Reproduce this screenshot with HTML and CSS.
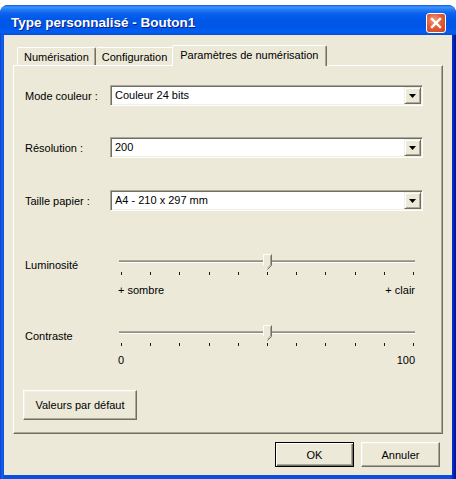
FILE: index.html
```html
<!DOCTYPE html>
<html lang="fr">
<head>
<meta charset="utf-8">
<title>Type personnalisé - Bouton1</title>
<link rel="stylesheet" href="styles.css">
</head>
<body>
<div class="window">
  <div class="titlebar">
    <span class="title">Type personnalisé - Bouton1</span>
    <div class="close">
      <svg width="18" height="18" viewBox="0 0 18 18"><path d="M5 5 L13 13 M13 5 L5 13" stroke="#fff" stroke-width="2.4" stroke-linecap="square"/></svg>
    </div>
  </div>
  <div class="client">
    <div class="tabs">
      <div class="tab">Numérisation</div>
      <div class="tab">Configuration</div>
      <div class="tab active">Paramètres de numérisation</div>
    </div>
    <div class="panel">
      <div class="field">
        <span class="label">Mode couleur :</span>
        <div class="combo"><span class="value">Couleur 24 bits</span><span class="drop"><svg width="7" height="4" viewBox="0 0 7 4"><path d="M0 0H7L3.5 4Z" fill="#000"/></svg></span></div>
      </div>
      <div class="field">
        <span class="label">Résolution :</span>
        <div class="combo"><span class="value">200</span><span class="drop"><svg width="7" height="4" viewBox="0 0 7 4"><path d="M0 0H7L3.5 4Z" fill="#000"/></svg></span></div>
      </div>
      <div class="field third">
        <span class="label">Taille papier :</span>
        <div class="combo"><span class="value">A4 - 210 x 297 mm</span><span class="drop"><svg width="7" height="4" viewBox="0 0 7 4"><path d="M0 0H7L3.5 4Z" fill="#000"/></svg></span></div>
      </div>

      <div class="slider-row first">
        <span class="label slabel">Luminosité</span>
        <div class="slider">
          <div class="track-box">
            <div class="track"></div>
            <svg class="thumb" width="9" height="16" viewBox="0 0 9 16"><path d="M0.5 0.5H8.5V11.5L4.5 15.5L0.5 11.5Z" fill="#ECE9D8"/><path d="M0.5 11.5V0.5H8" stroke="#fff" fill="none"/><path d="M8.5 0.5V11.5L4.5 15.5" stroke="#716F64" fill="none"/><path d="M7.5 1.5V11L4.5 14" stroke="#ACA899" fill="none"/></svg>
          </div>
          <div class="ticks"><i></i><i></i><i></i><i></i><i></i><i></i><i></i><i></i><i></i><i></i><i></i></div>
          <div class="scale"><span>+ sombre</span><span>+ clair</span></div>
        </div>
      </div>

      <div class="slider-row second">
        <span class="label slabel">Contraste</span>
        <div class="slider">
          <div class="track-box">
            <div class="track"></div>
            <svg class="thumb" width="9" height="16" viewBox="0 0 9 16"><path d="M0.5 0.5H8.5V11.5L4.5 15.5L0.5 11.5Z" fill="#ECE9D8"/><path d="M0.5 11.5V0.5H8" stroke="#fff" fill="none"/><path d="M8.5 0.5V11.5L4.5 15.5" stroke="#716F64" fill="none"/><path d="M7.5 1.5V11L4.5 14" stroke="#ACA899" fill="none"/></svg>
          </div>
          <div class="ticks"><i></i><i></i><i></i><i></i><i></i><i></i><i></i><i></i><i></i><i></i><i></i></div>
          <div class="scale"><span>0</span><span>100</span></div>
        </div>
      </div>

      <button class="btn defaults">Valeurs par défaut</button>
    </div>
    <div class="footer">
      <button class="btn default">OK</button>
      <button class="btn">Annuler</button>
    </div>
  </div>
</div>
</body>
</html>
```
FILE: styles.css
```css
html, body {
  margin: 0;
  padding: 0;
  background: #ffffff;
}
body {
  width: 456px;
  height: 479px;
  overflow: hidden;
  font-family: "Liberation Sans", Arial, sans-serif;
  font-size: 11px;
  color: #000;
}
.window {
  margin-top: 5px;
  height: 474px;
  display: flex;
  flex-direction: column;
  border-radius: 8px 8px 0 0;
  background: linear-gradient(to right, #0A3FD0 0px, #1662EC 2px, #0A4FDE 4px, #0A4FDE 451px, #0831D9 452px, #00138C 456px);
  overflow: hidden;
}
.titlebar {
  height: 30px;
  flex: none;
  display: flex;
  align-items: center;
  justify-content: space-between;
  background: linear-gradient(to bottom, #0A5BD8 0px, #3D93FF 2px, #2A82F8 4px, #0D63EE 8px, #0058E8 14px, #0055E6 22px, #0060F5 27px, #0A4CD2 30px);
}
.title {
  padding-left: 11px;
  padding-top: 5px;
  font-family: "Liberation Sans", Arial, sans-serif;
  font-weight: bold;
  font-size: 13.5px;
  color: #fff;
  text-shadow: 1px 1px 0 #0A1E8C;
}
.close {
  width: 18px;
  height: 18px;
  margin-right: 10px;
  margin-top: 6px;
  border: 1px solid #fff;
  border-radius: 3px;
  background: radial-gradient(circle at 40% 35%, #F0A080 0%, #E45D38 45%, #C8401C 100%);
  display: flex;
  align-items: center;
  justify-content: center;
}
.close svg { display: block; }
.client {
  flex: 1;
  margin: 0 4px 4px 4px;
  background: #ECE9D8;
  padding: 10px 9px 0 9px;
  display: flex;
  flex-direction: column;
}
.tabs {
  height: 20px;
  display: flex;
  align-items: flex-end;
  padding-left: 4px;
  position: relative;
  z-index: 1;
}
.tab {
  height: 18px;
  box-sizing: border-box;
  padding: 2px 6px 0 6px;
  line-height: 14px;
  border-top: 1px solid #fff;
  border-left: 1px solid #fff;
  border-right: 1px solid #716F64;
  box-shadow: inset -1px 0 #ACA899;
  border-radius: 2px 2px 0 0;
  background: #ECE9D8;
  white-space: nowrap;
}
.tab + .tab { border-left: none; }
.tab.active {
  height: 21px;
  margin-bottom: -1px;
  margin-left: -2px;
  padding: 2px 8px 0 7px;
  border-left: 1px solid #fff;
}
.panel {
  height: 369px;
  box-sizing: border-box;
  border-top: 1px solid #fff;
  border-left: 1px solid #fff;
  border-right: 1px solid #716F64;
  border-bottom: 1px solid #716F64;
  box-shadow: inset -1px -1px #ACA899;
  padding: 19px 0 0 11px;
  display: flex;
  flex-direction: column;
  align-items: flex-start;
}
.field {
  height: 21px;
  display: flex;
  align-items: center;
}
.field + .field { margin-top: 31px; }
.field.third { margin-top: 32px; }
.label {
  width: 85px;
  flex: none;
  line-height: 14px;
  white-space: nowrap;
}
.combo {
  width: 313px;
  height: 21px;
  box-sizing: border-box;
  background: #fff;
  border-style: solid;
  border-width: 1px;
  border-color: #ACA899 #fff #fff #ACA899;
  box-shadow: inset 1px 1px #716F64, inset -1px -1px #F1EFE2;
  padding: 1px;
  display: flex;
  align-items: stretch;
}
.value {
  flex: 1;
  padding-left: 3px;
  line-height: 17px;
  white-space: nowrap;
}
.drop {
  width: 17px;
  box-sizing: border-box;
  background: #ECE9D8;
  border-style: solid;
  border-width: 1px;
  border-color: #F1EFE2 #716F64 #716F64 #F1EFE2;
  box-shadow: inset 1px 1px #fff, inset -1px -1px #ACA899;
  display: flex;
  align-items: center;
  justify-content: center;
}
.drop svg { display: block; }
.slider-row {
  display: grid;
  grid-template-columns: 93px 298px;
  align-items: start;
}
.slider-row.first { margin-top: 42px; }
.slider-row.second { margin-top: 27px; }
.slabel { padding-top: 5px; width: auto; }
.slider { display: flex; flex-direction: column; }
.track-box {
  height: 16px;
  box-sizing: border-box;
  padding-top: 7px;
  position: relative;
}
.track {
  height: 3px;
  box-sizing: border-box;
  border-top: 1px solid #ACA899;
  background: #8F8D84;
  border-bottom: 1px solid #fff;
  margin: 0 1px;
}
.thumb {
  position: absolute;
  left: 145px;
  top: 1px;
  display: block;
}
.ticks {
  height: 8px;
  box-sizing: border-box;
  padding: 3px 2px 0 3px;
  display: flex;
  justify-content: space-between;
  align-items: flex-start;
}
.ticks i {
  display: block;
  width: 1px;
  height: 3px;
  background: #1a1a1a;
}
.scale {
  margin-top: 6px;
  line-height: 14px;
  display: flex;
  justify-content: space-between;
  padding-right: 1px;
}
.second .scale { margin-top: 5px; }
.btn {
  font-family: "Liberation Sans", Arial, sans-serif;
  font-size: 11px;
  color: #000;
  background: #ECE9D8;
  border-style: solid;
  border-width: 1px;
  border-color: #fff #716F64 #716F64 #fff;
  box-shadow: inset -1px -1px #ACA899, inset 1px 1px #F1EFE2;
  padding: 0;
  margin: 0;
  box-sizing: border-box;
}
.defaults {
  margin-top: 23px;
  margin-left: -2px;
  width: 114px;
  height: 30px;
}
.footer {
  margin-top: 8px;
  display: flex;
  justify-content: flex-end;
  gap: 7px;
  padding-right: 3px;
}
.footer .btn {
  width: 79px;
  height: 25px;
}
.btn.default {
  border: 1px solid #000;
  box-shadow: inset 1px 1px #fff, inset -1px -1px #716F64, inset -2px -2px #ACA899;
}
```
